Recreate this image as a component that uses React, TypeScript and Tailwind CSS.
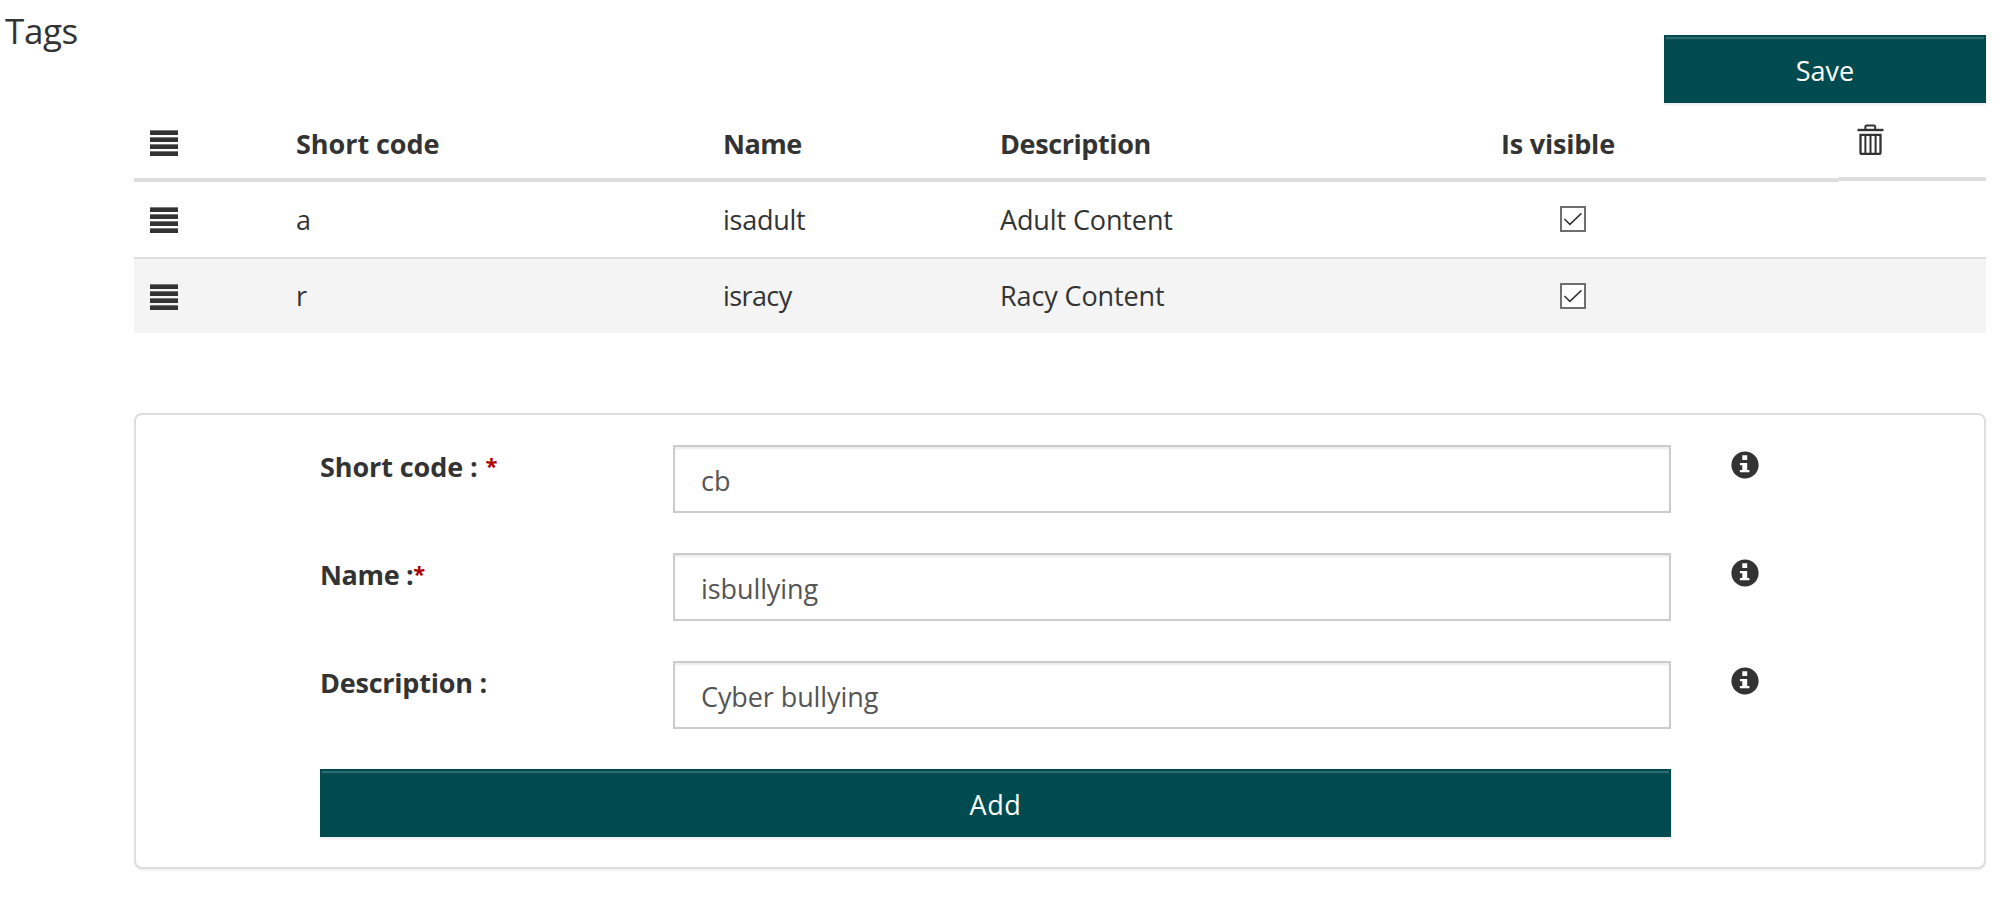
import { useState } from 'react';

type Tag = { code: string; name: string; description: string; nameTracking: string };

const tags: Tag[] = [
  { code: 'a', name: 'isadult', description: 'Adult Content', nameTracking: 'tracking-[-0.26px]' },
  { code: 'r', name: 'isracy', description: 'Racy Content', nameTracking: 'tracking-[-0.6px]' },
];

const columns = 'grid grid-cols-[146px_426px_278px_501px_354px_147px]';

function BarsIcon() {
  return (
    <svg width="28" height="26" viewBox="0 0 28 26" fill="#333" aria-hidden="true">
      {[0, 7, 14, 21].map((y) => (
        <g key={y}>
          <rect y={y} width="28" height="1" opacity="0.65" />
          <rect y={y + 1} width="28" height="4" />
        </g>
      ))}
    </svg>
  );
}

function TrashIcon() {
  return (
    <svg width="27" height="31" viewBox="0 0 27 31" fill="none" stroke="#333" strokeWidth="2" aria-hidden="true">
      <path d="M0.5 6H26.5" strokeWidth="2.4" />
      <path d="M8.4 6V2.7Q8.4 1.4 9.8 1.4H16.8Q18.2 1.4 18.2 2.7V6" />
      <path d="M3.5 10.8H23.5V28.4Q23.5 29.8 22.1 29.8H4.9Q3.5 29.8 3.5 28.4Z" strokeWidth="2.3" />
      <path d="M8.4 10.8V29.8M13.5 10.8V29.8M18.6 10.8V29.8" strokeWidth="2" />
    </svg>
  );
}

function InfoIcon() {
  return (
    <svg width="28" height="28" viewBox="0 0 28 28" aria-hidden="true">
      <circle cx="14" cy="14" r="13.6" fill="#333" />
      <path d="M11.3 4.3H16.2V9.1H11.3ZM8.9 12H16.2V19H18.4V21.2H8.9V19H11.3V14.2H8.9Z" fill="#fff" />
    </svg>
  );
}

function VisibleBox() {
  const [on, setOn] = useState(true);
  return (
    <button
      type="button"
      role="checkbox"
      aria-checked={on}
      aria-label="Is visible"
      onClick={() => setOn(!on)}
      className="block h-[26px] w-[26px] border-2 border-[#6e6e6e] bg-white"
    >
      {on && (
        <svg width="22" height="22" viewBox="0 0 22 22" fill="none" stroke="#333" strokeWidth="1.5" aria-hidden="true">
          <path d="M2.4 11L7.9 16.4L19.4 5.4" />
        </svg>
      )}
    </button>
  );
}

function ActionButton({ label, className }: { label: string; className: string }) {
  return (
    <button
      type="button"
      className={`flex h-[68px] items-center justify-center border-2 border-[#004b50] bg-[#004b50] pt-[3px] text-white shadow-[inset_0_2px_0_rgba(255,255,255,0.15),inset_0_3px_1px_rgba(255,255,255,0.04),0_2px_2px_rgba(0,0,0,0.075)] ${className}`}
    >
      {label}
    </button>
  );
}

function Field({ label, tracking, gap, required, value, valueTracking }: {
  label: string; tracking: string; gap?: string; required?: boolean; value: string; valueTracking: string;
}) {
  const [text, setText] = useState(value);
  return (
    <div className="flex h-[68px] items-start">
      <label className={`flex w-[353px] items-start whitespace-pre pt-[3px] font-bold ${tracking}`}>
        {label}
        {required && <span className={`text-[22px] leading-[35px] text-[#a80000] ${gap ?? ''}`}>*</span>}
      </label>
      <input
        value={text}
        onChange={(e) => setText(e.target.value)}
        className={`h-[68px] w-[998px] border-2 border-[#ccc] bg-white pl-[26px] pr-6 pt-[3px] text-[#555] shadow-[inset_0_2px_2px_rgba(0,0,0,0.075)] outline-none ${valueTracking}`}
      />
      <div className="ml-[60px] mt-[6px]">
        <InfoIcon />
      </div>
    </div>
  );
}

export default function App() {
  return (
    <div className="flex h-[900px] w-[2010px] flex-col overflow-hidden bg-white pl-[134px] pr-[24px] font-['Open_Sans',sans-serif] text-[27px] leading-[37px] text-[#333]">
      <div className="-ml-[129px] flex h-[109px] items-start justify-between">
        <h1 className="pt-[7px] text-[35px] leading-[48px] tracking-[-0.4px]">Tags</h1>
        <ActionButton label="Save" className="mt-[35px] w-[322px]" />
      </div>

      <div className={`${columns} h-[73px] shrink-0 items-start font-bold`}>
        <div className="flex h-[73px] items-start border-b-4 border-[#ddd] pl-4 pt-[21px]"><BarsIcon /></div>
        <div className="h-[73px] border-b-4 border-[#ddd] pl-4 pt-4 tracking-[-0.05px]">Short code</div>
        <div className="h-[73px] border-b-4 border-[#ddd] pl-[17px] pt-4 tracking-[-0.5px]">Name</div>
        <div className="h-[73px] border-b-4 border-[#ddd] pl-4 pt-4 tracking-[-0.4px]">Description</div>
        <div className="h-[73px] border-b-4 border-[#ddd] pl-4 pt-4 tracking-[-0.2px]">Is visible</div>
        <div className="h-[72px] border-b-4 border-[#ddd] pl-[18px] pt-[15px]"><TrashIcon /></div>
      </div>
      {tags.map((tag, i) => (
        <div
          key={tag.code}
          className={`${columns} shrink-0 items-start ${i === 0 ? 'h-[75px] pt-[19px]' : 'h-[76px] border-t-2 border-[#ddd] bg-[#f4f4f4] pt-[18px]'}`}
        >
          <div className={`pl-4 ${i === 0 ? 'pt-[6px]' : 'pt-[7px]'}`}><BarsIcon /></div>
          <div className="pl-4">{tag.code}</div>
          <div className={`pl-[17px] ${tag.nameTracking}`}>{tag.name}</div>
          <div className="pl-4 tracking-[-0.12px]">{tag.description}</div>
          <div className={`pl-[75px] ${i === 0 ? 'pt-[5px]' : 'pt-[6px]'}`}><VisibleBox /></div>
          <div />
        </div>
      ))}

      <form
        onSubmit={(e) => e.preventDefault()}
        className="mt-20 flex h-[456px] w-[1852px] shrink-0 flex-col gap-10 rounded-[8px] border-2 border-[#ddd] bg-white pl-[184px] pt-[30px] shadow-[0_2px_2px_rgba(0,0,0,0.05)]"
      >
        <Field label="Short code :" tracking="tracking-[-0.09px]" gap="ml-2" required value="cb" valueTracking="tracking-[0.07px]" />
        <Field label="Name :" tracking="tracking-[-0.35px]" required value="isbullying" valueTracking="tracking-[-0.09px]" />
        <Field label="Description :" tracking="tracking-[-0.23px]" value="Cyber bullying" valueTracking="tracking-[-0.09px]" />
        <ActionButton label="Add" className="w-[1351px] tracking-[0.6px]" />
      </form>
    </div>
  );
}
